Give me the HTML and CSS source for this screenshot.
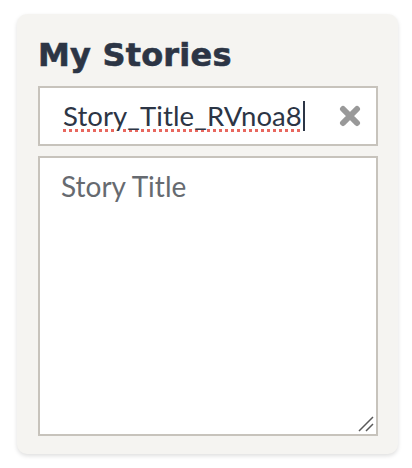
FILE: index.html
```html
<!DOCTYPE html>
<html>
<head>
<meta charset="utf-8">
<link rel="stylesheet" href="styles.css">
</head>
<body>
<div class="prev"></div>
<section class="card">
  <h2 class="title">My Stories</h2>
  <div class="field">
    <span class="value">Story_Title_RVnoa8</span><span class="caret"></span>
    <svg class="clear" width="24" height="22" viewBox="0 0 24 22" aria-label="clear">
      <path d="M5 4 L19 18 M19 4 L5 18" stroke="#999" stroke-width="6" stroke-linecap="round"/>
    </svg>
  </div>
  <div class="area">
    <textarea class="body" placeholder="Story Title"></textarea>
    <svg class="grip" width="16" height="16" viewBox="0 0 16 16">
      <path d="M1 15 L15 1 M8 15 L15 8" stroke="#5a5a5a" stroke-width="1.5"/>
    </svg>
  </div>
</section>
</body>
</html>
```
FILE: styles.css
```css
html, body {
  margin: 0;
  padding: 0;
  background: #ffffff;
}
body {
  width: 412px;
  height: 468px;
  overflow: hidden;
  font-family: "Lato", "Open Sans", sans-serif;
}
.prev {
  height: 0;
  margin: 0 20px;
  box-shadow: 0 0 3px rgba(0,0,0,0.10);
}
.card {
  box-sizing: border-box;
  margin: 14px 0 0 17px;
  width: 381px;
  height: 440px;
  background: #f5f4f1;
  border-radius: 10px;
  box-shadow: 0 2px 4px rgba(0,0,0,0.13);
  padding: 21px 20px 0 21px;
  display: flex;
  flex-direction: column;
}
.title {
  margin: 0 0 11px 0;
  font-family: "DejaVu Sans", "Lato", sans-serif;
  font-size: 32px;
  line-height: 40px;
  font-weight: 700;
  letter-spacing: 0.2px;
  -webkit-text-stroke: 0.6px #2c3545;
  color: #2c3545;
}
.field {
  box-sizing: border-box;
  width: 340px;
  height: 60px;
  border: 2px solid #c7c3bc;
  background: #fff;
  display: flex;
  align-items: center;
  padding-left: 23px;
  font-size: 27.5px;
  letter-spacing: 0.1px;
  color: #2c3545;
}
.value {
  text-decoration: underline dotted #e8675e;
  text-decoration-thickness: 3px;
  text-underline-offset: 3px;
  margin-top: -2px;
}
.caret {
  width: 2px;
  height: 30px;
  background: #2c3545;
  margin-left: 1px;
}
.clear {
  margin-left: auto;
  margin-right: 14px;
}
.area {
  position: relative;
  margin-top: 10px;
  width: 340px;
  height: 280px;
}
.body {
  box-sizing: border-box;
  display: block;
  width: 340px;
  height: 280px;
  margin: 0;
  border: 2px solid #c7c3bc;
  background: #fff;
  padding: 11px 21px;
  font-family: "Lato", "Open Sans", sans-serif;
  font-size: 28px;
  color: #2c3545;
  outline: none;
  resize: none;
}
.body::placeholder {
  color: #666a70;
}
.grip {
  position: absolute;
  right: 4px;
  bottom: 4px;
}
```
